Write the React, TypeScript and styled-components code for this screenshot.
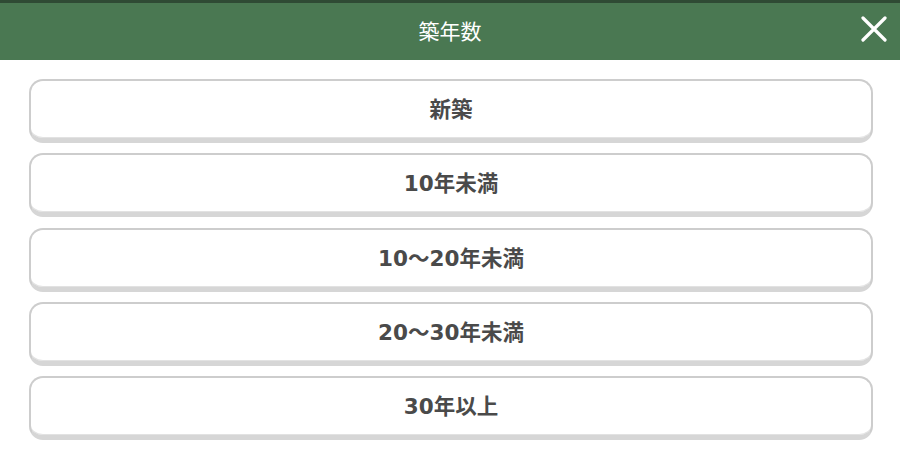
import React from "react";
import styled, { createGlobalStyle } from "styled-components";

const Global = createGlobalStyle`
  html, body { margin: 0; padding: 0; background: #fff; }
  body { font-family: "Noto Sans CJK JP", "Noto Sans", sans-serif; }
`;

const Page = styled.div`
  width: 900px;
  height: 458px;
  background: #fff;
  overflow: hidden;
`;

const Header = styled.header`
  position: relative;
  height: 60px;
  background: #4a7852;
  border-top: 3px solid #2f4a34;
  box-sizing: border-box;
  display: flex;
  align-items: center;
  justify-content: center;
`;

const Title = styled.h1`
  margin: 0;
  margin-top: -3px;
  font-family: "Noto Sans CJK JP", sans-serif;
  font-size: 21px;
  font-weight: 400;
  color: #fff;
`;

const Close = styled.button`
  position: absolute;
  right: 10px;
  top: 10px;
  width: 32px;
  height: 32px;
  padding: 0;
  border: none;
  background: none;
  display: flex;
  align-items: center;
  justify-content: center;
  cursor: pointer;
`;

const List = styled.div`
  display: flex;
  flex-direction: column;
  gap: 10.25px;
  padding: 19px 27px 0 29px;
`;

const Option = styled.button`
  height: 64px;
  box-sizing: border-box;
  border: 2px solid #cdcdcd;
  border-bottom-width: 5px;
  border-bottom-color: #d6d6d6;
  border-radius: 14px;
  background: #fff;
  box-shadow: inset 0 -1px 0 #e2e2e2;
  font-family: "DejaVu Sans", "Noto Sans CJK JP", sans-serif;
  font-size: 21.5px;
  font-weight: 700;
  color: #4a4a4a;
  display: flex;
  align-items: center;
  justify-content: center;
  padding: 0 0 4px;
  cursor: pointer;
`;

const options = ["新築", "10年未満", "10～20年未満", "20～30年未満", "30年以上"];

export default function App() {
  return (
    <Page>
      <Global />
      <Header>
        <Title>築年数</Title>
        <Close aria-label="閉じる">
          <svg width="26" height="26" viewBox="0 0 26 26">
            <path d="M2 2 L24 24 M24 2 L2 24" stroke="#fff" strokeWidth="3.2" strokeLinecap="round" />
          </svg>
        </Close>
      </Header>
      <List>
        {options.map((o) => (
          <Option key={o}>{o}</Option>
        ))}
      </List>
    </Page>
  );
}
